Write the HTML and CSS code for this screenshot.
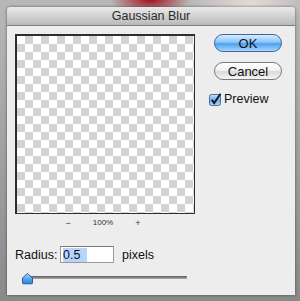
FILE: index.html
```html
<!DOCTYPE html>
<html lang="en">
<head>
    <meta charset="UTF-8">
    <title>Gaussian Blur</title>
    <link rel="stylesheet" href="styles.css">
</head>
<body>

    <div class="dialog">
        <div class="titlebar">Gaussian Blur</div>

        <div class="content">
            <div class="left-col">
                <div class="preview"></div>

                <div class="zoom-row">
                    <span>&minus;</span>
                    <span class="zoom-value">100%</span>
                    <span>+</span>
                </div>

                <div class="radius-row">
                    <label for="radius">Radius:</label>
                    <div class="field"><span class="selected">0.5</span></div>
                    <span class="unit">pixels</span>
                </div>

                <div class="slider">
                    <div class="track"></div>
                    <svg class="thumb" width="13" height="13" viewBox="0 0 13 13">
                        <defs>
                            <linearGradient id="thumbFill" x1="0" y1="0" x2="0" y2="1">
                                <stop offset="0" stop-color="#bfe0ff"/>
                                <stop offset="0.5" stop-color="#5aa6f0"/>
                                <stop offset="1" stop-color="#2f7fd8"/>
                            </linearGradient>
                        </defs>
                        <path d="M1.5 6 L6.5 1.5 L11.5 6 V11 Q11.5 11.8 10.5 11.8 H2.5 Q1.5 11.8 1.5 11 Z" fill="url(#thumbFill)" stroke="#2b5b9a" stroke-width="1"/>
                    </svg>
                </div>
            </div>

            <div class="right-col">
                <button type="button" class="btn btn-default">OK</button>
                <button type="button" class="btn">Cancel</button>

                <div class="check-row">
                    <svg class="checkbox" width="13" height="13" viewBox="0 0 13 13">
                        <defs>
                            <linearGradient id="boxFill" x1="0" y1="0" x2="0" y2="1">
                                <stop offset="0" stop-color="#c5e3ff"/>
                                <stop offset="0.5" stop-color="#6ab0f2"/>
                                <stop offset="1" stop-color="#a6d4fb"/>
                            </linearGradient>
                        </defs>
                        <rect x="0.5" y="1.5" width="11" height="11" rx="2" fill="url(#boxFill)" stroke="#4a6fa0"/>
                        <path d="M2.8 6.8 L5.2 10 L11.5 0.8" fill="none" stroke="#1a1a1a" stroke-width="2"/>
                    </svg>
                    <span>Preview</span>
                </div>
            </div>
        </div>
    </div>

</body>
</html>
```

FILE: styles.css
```css
body {
    margin: 0;
    padding: 7px 0 0 7px;
    width: 300px;
    height: 301px;
    box-sizing: border-box;
    overflow: hidden;
    font-family: "Liberation Sans", Arial, sans-serif;
    background-color: #8e8e8e;
    background-image:
        radial-gradient(ellipse 40px 14px at 150px 0px, #a0101c 0%, rgba(160, 16, 28, 0) 100%),
        radial-gradient(ellipse 60px 20px at 250px 4px, #e6dcd8 0%, rgba(230, 220, 216, 0) 100%),
        linear-gradient(to bottom, #b8b8b8 0%, #8a8a8a 100%);
}

.dialog {
    width: 288px;
    height: 288px;
    background-color: #ededed;
    border-radius: 4px 4px 0 0;
    box-shadow: 0 0 3px rgba(0, 0, 0, 0.5);
    overflow: hidden;
}

.titlebar {
    height: 18px;
    line-height: 19px;
    text-align: center;
    font-size: 12.5px;
    color: #2a2a2a;
    background: linear-gradient(to bottom, #e9e9e9 0%, #d2d2d2 50%, #b9b9b9 100%);
    border-bottom: 1px solid #7d7d7d;
}

.content {
    display: flex;
    padding: 8px 0 0 8px;
}

.left-col {
    width: 180px;
}

.preview {
    width: 180px;
    height: 180px;
    box-sizing: border-box;
    border: 2px solid #2e2e2e;
    border-right-width: 1px;
    border-bottom-width: 1px;
    background-color: #fff;
    background-image: conic-gradient(#d3d3d3 25%, #fff 0 50%, #d3d3d3 0 75%, #fff 0);
    background-size: 16px 16px;
}

.zoom-row {
    display: flex;
    justify-content: center;
    gap: 22px;
    height: 12px;
    margin-top: 3px;
    padding-right: 4px;
    font-size: 9px;
    line-height: 12px;
    color: #333;
}

.zoom-value {
    font-size: 8px;
}

.radius-row {
    display: flex;
    align-items: center;
    height: 17px;
    margin-top: 17px;
    font-size: 12.5px;
    color: #111;
}

.radius-row label {
    width: 45px;
}

.field {
    width: 54px;
    height: 17px;
    box-sizing: border-box;
    border: 1px solid #9a9a9a;
    border-top-color: #7a7a7a;
    background-color: #fff;
    padding: 1px 0 0 2px;
    line-height: 14px;
}

.selected {
    background-color: #b5d5ff;
    padding-right: 7px;
}

.unit {
    margin-left: 8px;
}

.slider {
    position: relative;
    height: 13px;
    margin-top: 9px;
}

.track {
    position: absolute;
    left: 12px;
    top: 4px;
    width: 160px;
    height: 3px;
    background: linear-gradient(to bottom, #5a5a5a 0%, #8a8a8a 60%, #b0b0b0 100%);
    border-radius: 1px;
}

.thumb {
    position: absolute;
    left: 6px;
    top: 0;
}

.right-col {
    display: flex;
    flex-direction: column;
    align-items: flex-start;
    margin-left: 19px;
}

.btn {
    width: 68px;
    height: 18px;
    padding: 0;
    border-radius: 9px;
    border: 1px solid #7a7a7a;
    font-family: "Liberation Sans", Arial, sans-serif;
    font-size: 13px;
    line-height: 15px;
    color: #111;
    background: linear-gradient(to bottom, #ffffff 0%, #f2f2f2 45%, #dadada 55%, #f6f6f6 100%);
    margin-bottom: 10px;
}

.btn-default {
    border-color: #3d65a4;
    background: linear-gradient(to bottom, #d6ecff 0%, #8cc6fa 45%, #4f9ff0 55%, #a9d8ff 100%);
}

.check-row {
    display: flex;
    align-items: center;
    gap: 2px;
    margin-top: 2px;
    margin-left: -5px;
    font-size: 12.5px;
    color: #111;
}
```
